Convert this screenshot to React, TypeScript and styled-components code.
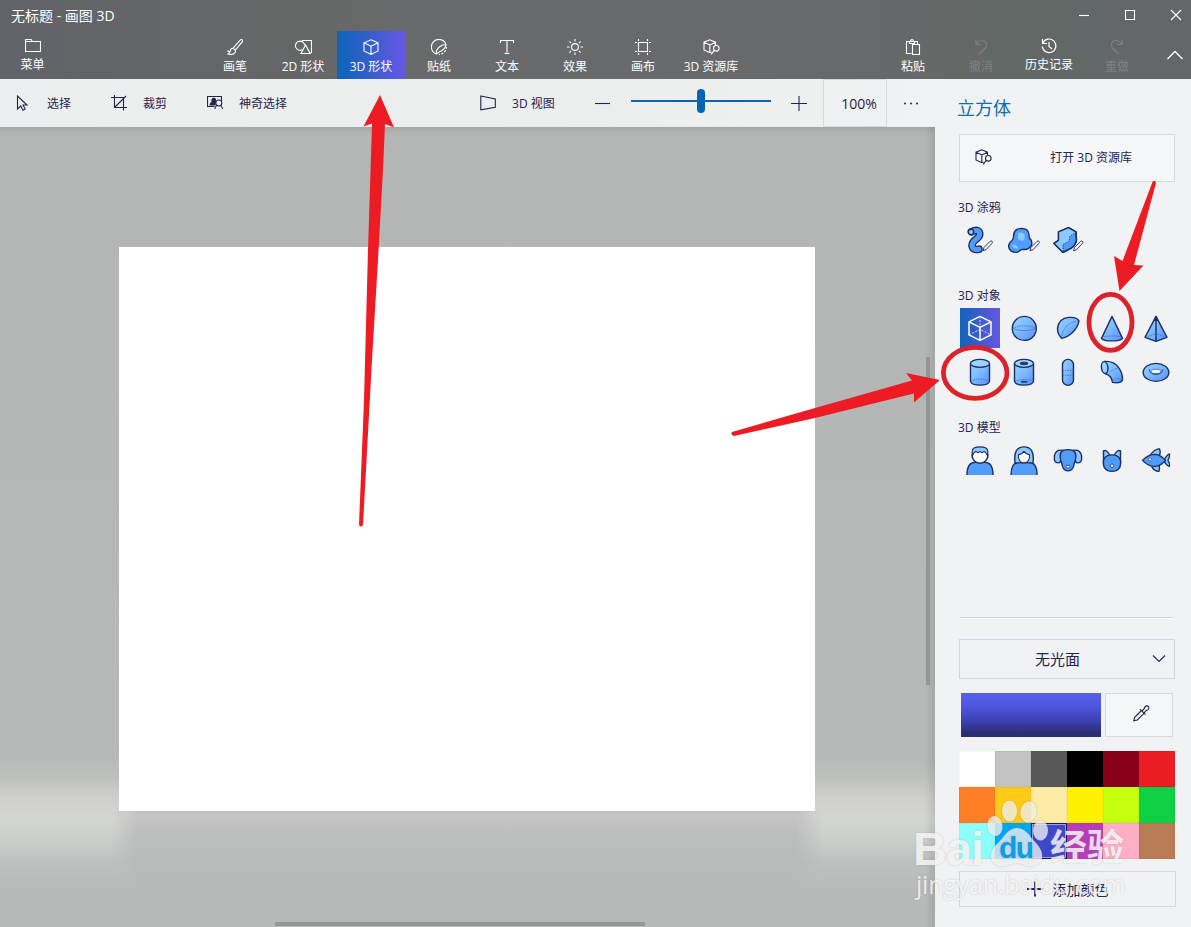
import type { ReactNode } from "react";
import styled, { createGlobalStyle } from "styled-components";

const GlobalStyle = createGlobalStyle`
  * {
    box-sizing: border-box;
  }
  body {
    margin: 0;
    overflow: hidden;
    font-family: "Open Sans", "Noto Sans CJK SC", sans-serif;
    font-size: 12px;
    color: #26234f;
  }
  button {
    font: inherit;
    color: inherit;
    padding: 0;
  }
  svg {
    display: block;
    flex-shrink: 0;
  }
`;

const Window = styled.div`
  position: relative;
  display: flex;
  flex-direction: column;
  width: 1191px;
  height: 927px;
  overflow: hidden;
`;

const Header = styled.header`
  height: 79px;
  color: #ffffff;
  background: linear-gradient(
    90deg,
    #626368 0%,
    #656767 25%,
    #696a6b 35%,
    #68696b 68%,
    #626866 85%,
    #64666a 100%
  );
`;

const TitleBar = styled.div`
  display: flex;
  justify-content: space-between;
  align-items: center;
  height: 31px;
  padding: 0 0 2px 11px;
`;

const Title = styled.span`
  font-size: 14px;
`;

const WindowButtons = styled.div`
  display: flex;
  gap: 30px;
  padding-right: 7px;
`;

const Ribbon = styled.div`
  display: flex;
  height: 48px;
`;

const RibbonButton = styled.button<{
  $active?: boolean;
  $disabled?: boolean;
  $raised?: boolean;
}>`
  display: flex;
  flex-direction: column;
  align-items: center;
  width: 68px;
  height: 48px;
  padding-top: ${(p) => (p.$raised ? 7 : 8)}px;
  border: none;
  line-height: 16px;
  white-space: nowrap;
  gap: ${(p) => (p.$raised ? 3 : 4)}px;
  color: ${(p) => (p.$disabled ? "#808184" : "#ffffff")};
  background: ${(p) =>
    p.$active ? "linear-gradient(90deg, #0b64b8, #6657e4)" : "transparent"};
`;

const MenuButton = styled(RibbonButton)`
  width: 65px;
  margin-right: 136px;
`;

const RibbonTabs = styled.div`
  display: flex;
  flex: 1;
`;

const CollapseButton = styled.button`
  display: flex;
  align-items: center;
  justify-content: center;
  width: 32px;
  margin-left: 8px;
  border: none;
  color: #ffffff;
  background: transparent;
`;

const Body = styled.div`
  display: flex;
  flex: 1;
`;

const Main = styled.main`
  display: flex;
  flex-direction: column;
  width: 935px;
`;

const Toolbar = styled.div`
  display: flex;
  align-items: center;
  height: 48px;
  padding-left: 14px;
  background: linear-gradient(90deg, #edeeef, #eceeed 60%, #f0f2f3);
`;

const Tool = styled.div<{ $gap: number; $after: number }>`
  display: flex;
  align-items: center;
  gap: ${(p) => p.$gap}px;
  margin-right: ${(p) => p.$after}px;
  white-space: nowrap;
`;

const ZoomTrack = styled.div`
  display: flex;
  justify-content: center;
  align-items: center;
  width: 140px;
  height: 2px;
  margin: 0 20px 5px 21px;
  background: #0f66ae;
`;

const ZoomThumb = styled.div`
  width: 8px;
  height: 24px;
  border-radius: 4px;
  background: #0863b1;
`;

const ZoomValue = styled.div`
  display: flex;
  align-items: center;
  justify-content: flex-end;
  width: 64px;
  height: 48px;
  margin-left: 16px;
  padding-right: 9px;
  border: 1px solid #d6d9de;
  font-size: 14px;
`;

const MoreButton = styled.div`
  display: flex;
  flex: 1;
  justify-content: center;
`;

const Workspace = styled.div`
  position: relative;
  flex: 1;
  padding: 120px 0 0 119px;
  background:
    linear-gradient(90deg, transparent 925px, rgba(60, 60, 60, 0.14) 935px),
    linear-gradient(
      180deg,
      #a4a6a5 0,
      #b4b6b5 7px,
      #b5b7b6 300px,
      #b7b9b8 630px,
      #bec0be 650px,
      #cfd0cd 672px,
      #d4d6d3 692px,
      #cdcfcc 712px,
      #bfc1c0 734px,
      #b8bab9 764px,
      #b7b9b8 800px
    );
`;

const Paper = styled.div`
  width: 696px;
  height: 564px;
  background: #ffffff;
`;

const PaperReflection = styled.div`
  width: 712px;
  height: 100px;
  margin-left: -8px;
  background: linear-gradient(
    180deg,
    #bfc1bf 0,
    #c6c7c4 4px,
    #c1c2c1 12px,
    #bcbebd 24px,
    #b8bab9 60px
  );
  mask-image: linear-gradient(
    90deg,
    transparent,
    #000 26px,
    #000 686px,
    transparent
  );
`;

const Scrollbar = styled.div<{ $vertical?: boolean }>`
  position: absolute;
  left: ${(p) => (p.$vertical ? 926 : 275)}px;
  top: ${(p) => (p.$vertical ? 230 : 795)}px;
  width: ${(p) => (p.$vertical ? 4 : 370)}px;
  height: ${(p) => (p.$vertical ? 328 : 4)}px;
  background: #949695;
`;

const SidePanel = styled.aside`
  display: flex;
  flex-direction: column;
  width: 256px;
  padding: 14px 16px 0 24px;
  background: #f0f2f4;
`;

const PanelTitle = styled.h1`
  margin: 0 0 11px -2px;
  font-size: 18px;
  font-weight: 400;
  line-height: 30px;
  color: #136ca4;
`;

const LibraryButton = styled.button`
  display: flex;
  align-items: center;
  justify-content: space-between;
  height: 48px;
  padding: 0 42px 2px 15px;
  border: 1px solid #d7d9de;
  background: #f4f6f8;
`;

const SectionTitle = styled.h2<{ $top: number }>`
  margin: ${(p) => p.$top}px 0 3px -1px;
  font-size: 12px;
  font-weight: 400;
  line-height: 18px;
`;

const ShapeGrid = styled.div`
  display: grid;
  grid-template-columns: repeat(5, 40px);
  grid-auto-rows: 40px;
  gap: 4px;
  margin-left: 1px;
`;

const ShapeButton = styled.button<{ $selected?: boolean }>`
  display: flex;
  align-items: center;
  justify-content: center;
  border: none;
  background: ${(p) =>
    p.$selected ? "linear-gradient(90deg, #1263b8, #6556e2)" : "transparent"};
`;

const Divider = styled.div`
  height: 2px;
  margin: 137px 2px 20px 1px;
  border-top: 1px solid #d3d5da;
  border-bottom: 1px solid #ffffff;
`;

const MaterialSelect = styled.button`
  display: grid;
  grid-template-columns: 30px 1fr 30px;
  align-items: center;
  justify-items: center;
  height: 40px;
  padding-bottom: 2px;
  border: 1px solid #d3d5e0;
  background: #f0f2f5;
  font-size: 15px;
`;

const MaterialName = styled.span`
  margin-right: 19px;
`;

const CurrentColor = styled.div`
  display: flex;
  gap: 4px;
  height: 44px;
  margin: 14px 2px 14px 2px;
`;

const ColorPreview = styled.div`
  width: 140px;
  background: linear-gradient(
    180deg,
    #5660ed 0%,
    #4d55dc 32%,
    #3b3fae 66%,
    #2c2e72 90%,
    #2c2e70 100%
  );
`;

const PickerButton = styled.button`
  display: flex;
  flex: 1;
  align-items: center;
  justify-content: center;
  padding: 0 0 3px 4px;
  border: 1px solid #d7d9de;
  background: #f4f6f8;
`;

const Palette = styled.div`
  display: grid;
  grid-template-columns: repeat(6, 36px);
  grid-auto-rows: 36px;
`;

const Swatch = styled.div<{ $color: string; $selected?: boolean }>`
  background: ${(p) => p.$color};
  border: ${(p) => (p.$selected ? "1px solid #191947" : "none")};
  box-shadow: ${(p) =>
    p.$selected ? "inset 0 0 0 1px #9ba0df" : "inset 0 0 0 1px rgba(0,0,0,0.03)"};
`;

const AddColorButton = styled.button`
  display: flex;
  align-items: center;
  justify-content: center;
  gap: 10px;
  width: 217px;
  height: 36px;
  margin-top: 12px;
  border: 1px solid #d7d9de;
  background: #f0f2f4;
  font-size: 14px;
`;

const Annotations = styled.svg`
  position: absolute;
  inset: 0;
  pointer-events: none;
`;

const Watermark = styled.div`
  position: absolute;
  left: 912px;
  top: 796px;
  width: 220px;
  height: 108px;
  color: rgba(255, 255, 255, 0.78);
  text-shadow: 0 0 2px rgba(130, 130, 130, 0.4);
  pointer-events: none;
`;

const WatermarkText = styled.span<{
  $x: number;
  $y: number;
  $size: number;
  $bold?: boolean;
  $color?: string;
  $spacing?: number;
}>`
  position: absolute;
  left: ${(p) => p.$x}px;
  top: ${(p) => p.$y}px;
  font-family: "Liberation Sans", "Noto Sans CJK SC", sans-serif;
  font-size: ${(p) => p.$size}px;
  font-weight: ${(p) => (p.$bold ? 700 : 400)};
  letter-spacing: ${(p) => p.$spacing ?? 0}px;
  line-height: 1;
  white-space: nowrap;
  color: ${(p) => p.$color ?? "inherit"};
`;

const DomainText = styled(WatermarkText)`
  font-family: "Open Sans", sans-serif;
`;

const Paw = styled.svg`
  position: absolute;
  left: 72px;
  top: 0;
  filter: drop-shadow(0 0 1px rgba(110, 110, 110, 0.5));
`;

type IconProps = {
  children: ReactNode;
  width?: number;
  height?: number;
  strokeWidth?: number;
};

const Icon = ({
  children,
  width = 16,
  height = 16,
  strokeWidth = 1.1,
}: IconProps) => (
  <svg
    width={width}
    height={height}
    viewBox={`0 0 ${width} ${height}`}
    fill="none"
    stroke="currentColor"
    strokeWidth={strokeWidth}
  >
    {children}
  </svg>
);

const FolderIcon = () => (
  <Icon>
    <path d="M.5 1.5H6L7.5 3.5H15.5V13.5H.5ZM.5 3.5H7.5" />
  </Icon>
);

const BrushIcon = () => (
  <Icon>
    <path d="M6 9.2L13.2 1.2Q14.5 0 15.4 1Q16 2 15 3.2L8.3 11.2M6 9.2L8.3 11.2M6 9.2Q3.7 9.3 3.2 12Q2.8 14.3 1 15Q5.5 16.3 7.5 14.2Q9 12.7 8.3 11.2M.5 11.5L3 13.5" />
  </Icon>
);

const Shapes2DIcon = () => (
  <Icon width={17}>
    <path d="M7.5 2.8V1.5H16.5V13.5H15.5M10.5 6L6 14.5H15.2Z" />
    <path d="M7.2 10.8A4.6 4.6 0 1 1 9.6 6" />
  </Icon>
);

const CubeIcon = () => (
  <Icon>
    <path d="M8 .8L15 3.8V12L8 15.4L1 12V3.8ZM1 3.8L8 7.2L15 3.8M8 7.2V15.4" />
  </Icon>
);

const StickerIcon = () => (
  <Icon>
    <path d="M5.5 15A7.5 7.5 0 1 1 15 5.5M5.5 15Q4.5 10.5 9 7.5Q12 5.3 15 5.5Q14.8 9 11 11.5Q7.5 13 5.5 15" />
    <path d="M15.4 8A7.5 7.5 0 0 1 8 15.4" strokeDasharray="2 1.5" />
  </Icon>
);

const TextIcon = () => (
  <Icon>
    <path d="M1.5 4V1.5H14.5V4M8 1.5V14.5M5.5 14.5H10.5" />
  </Icon>
);

const EffectsIcon = () => (
  <Icon>
    <circle cx="8" cy="8" r="3.4" />
    <path d="M8 0V2.5M8 13.5V16M0 8H2.5M13.5 8H16M2.4 2.4L4.1 4.1M11.9 11.9L13.6 13.6M13.6 2.4L11.9 4.1M4.1 11.9L2.4 13.6" />
  </Icon>
);

const CanvasIcon = () => (
  <Icon>
    <path d="M3.5 3.5H12.5V12.5H3.5ZM3.5 0V2M12.5 0V2M3.5 14V16M12.5 14V16M0 3.5H2M14 3.5H16M0 12.5H2M14 12.5H16" />
  </Icon>
);

const LibraryIcon = () => (
  <Icon width={17}>
    <path d="M12.5 6V3.2L6.8.8L1 3.2V11L6.8 13.7L8.5 12.9M1 3.2L6.8 6L12.5 3.2M6.8 6V13.7" />
    <circle cx="13.3" cy="9.3" r="2.8" />
    <path d="M11.3 11.3L8.2 15.4" />
  </Icon>
);

const PasteIcon = () => (
  <Icon>
    <path d="M6.5 14.5H1.5V2.5H12.5V5.5M4.5 4.5V2.5H5.5Q5.5.6 7 .6Q8.5.6 8.5 2.5H9.5V4.5ZM7.5 5.5H14.5V15.5H7.5Z" />
  </Icon>
);

const UndoIcon = () => (
  <Icon>
    <path d="M3 .5V5.5H8M3 5.2Q6 1.5 9.5 1.5Q13.5 2 13.5 6Q13.5 8 12 9.5L6 15.3" />
  </Icon>
);

const RedoIcon = () => (
  <Icon>
    <path d="M13 .5V5.5H8M13 5.2Q10 1.5 6.5 1.5Q2.5 2 2.5 6Q2.5 8 4 9.5L10 15.3" />
  </Icon>
);

const HistoryIcon = () => (
  <Icon strokeWidth={1.2}>
    <path d="M1.5 1V5.5H6M1.8 5.2A6.8 6.8 0 1 1 1.3 8.5M8 4V8.5L11 11" />
  </Icon>
);

const MagicSelectIcon = () => (
  <Icon width={17}>
    <path d="M7.5 11.5H.5V1.5H14.5V6" />
    <path d="M3 10Q3.2 7.8 5.2 7.4Q4 3.4 7 3.4Q9 3.6 8.4 6.2L8 10Z" fill="currentColor" />
    <circle cx="11.8" cy="8" r="3" />
    <path d="M9.8 10.4Q8.3 11.5 7.8 14.2M13.6 10.4Q15 11.5 15.6 14.2" />
  </Icon>
);

const tabs = [
  { label: "画笔", icon: <BrushIcon /> },
  { label: "2D 形状", icon: <Shapes2DIcon /> },
  { label: "3D 形状", icon: <CubeIcon />, active: true },
  { label: "贴纸", icon: <StickerIcon /> },
  { label: "文本", icon: <TextIcon /> },
  { label: "效果", icon: <EffectsIcon /> },
  { label: "画布", icon: <CanvasIcon /> },
  { label: "3D 资源库", icon: <LibraryIcon /> },
];

const actions = [
  { label: "粘贴", icon: <PasteIcon /> },
  { label: "撤消", icon: <UndoIcon />, disabled: true },
  { label: "历史记录", icon: <HistoryIcon />, raised: true },
  { label: "重做", icon: <RedoIcon />, disabled: true },
];

const swatches = [
  "#ffffff", "#c3c3c3", "#585858", "#000000", "#88001b", "#ec1c24",
  "#ff7f27", "#ffca18", "#fdeca6", "#fff200", "#c4ff0e", "#0ed145",
  "#8cfffb", "#00a8f3", "#3f48cc", "#b83dba", "#ffaec8", "#b97a56",
];
const selectedColor = "#3f48cc";

// Shape drawings are centred on the origin
const Shape = ({ children }: { children: ReactNode }) => (
  <svg
    width="36"
    height="36"
    viewBox="-18 -18.4 36 36"
    fill="url(#shapeFill)"
    stroke="#1c2e63"
    strokeWidth="1.4"
    strokeLinejoin="round"
  >
    {children}
  </svg>
);

const dashed = {
  fill: "none",
  stroke: "#3465ae",
  strokeWidth: 0.8,
  strokeDasharray: "1.5 1",
};

const Pencil = ({ x }: { x: number }) => (
  <path
    d="M0 9.5L1 6.3L7 .2Q8.5-.8 9.2 .3Q9.8 1.3 8.8 2.3L3 8.5Z"
    transform={`translate(${x} .8)`}
    fill="#f5f6fa"
    stroke="#37365f"
    strokeWidth="1"
  />
);

const tubePath = "M-8.5-8.7Q-1.5-12-.3-7Q0-4-3.5-1.5Q-9.5 3-7.5 7Q-6 9.8-1 8.8";

const doodles = [
  <Shape key="tube">
    <path d={tubePath} fill="none" strokeWidth="7.6" strokeLinecap="round" />
    <path d={tubePath} fill="none" stroke="#509cfa" strokeWidth="5" strokeLinecap="round" />
    <circle cx="-9" cy="-8.5" r="2.7" fill="#8fcbfc" />
    <Pencil x={3} />
  </Shape>,
  <Shape key="blob">
    <path d="M-10.5-3Q-11-11.8-2.5-12Q5-12 5.2-4.5Q5-2 7-.5Q9.5 5 4.5 8Q2.5 9.3-1 9Q-3 9-5.5 11.3Q-9 13-13 10.5Q-17.5 6-13.5 1.5Q-11 0-10.5-3Z" fill="#519dfb" />
    <path d="M-6-7.5Q-1-8.5 .5-6V-.5Q-3 1.5-6-1.5ZM-12.5 4.5Q-8 3-5.5 8Q-10 8.5-12.5 4.5Z" fill="#8bcafc" stroke="none" />
    <Pencil x={6} />
  </Shape>,
  <Shape key="rock">
    <path d="M-9.5-8.5L.5-12.7L8-8.5L8.5 0Q7 7-1 10L-5 12L-14 3L-9.5 0Z" fill="#509cfa" />
    <path d="M-9.5-8.5L.5-12.7L8-8.5L2-4L1 1L-5 4V12L-14 3L-9.5 0Z" fill="#8bcafc" stroke="none" />
    <path d="M8-8.5L2-4L1 1L-5 4V12" {...dashed} stroke="#1c2e63" />
    <path d="M-9.5-8.5L.5-12.7L8-8.5L8.5 0Q7 7-1 10L-5 12L-14 3L-9.5 0Z" fill="none" />
    <Pencil x={5.5} />
  </Shape>,
];

const objects = [
  <Shape key="cube">
    <g fill="none" stroke="#ffffff">
      <path d="M0-12L11-6.5V6.5L0 12L-11 6.5V-6.5ZM-11-6.5L0-1L11-6.5M0-1V12" strokeWidth="1.5" />
      <path d="M0-12V0M-11 6.5L0 1L11 6.5" strokeWidth=".8" strokeDasharray="2 1.5" />
    </g>
  </Shape>,
  <Shape key="sphere">
    <circle cx=".3" r="12" />
    <path d="M-11.7 0Q0 4.5 12.3 0" fill="none" strokeWidth=".6" stroke="#3465ae" />
    <path d="M-11.7 0Q0-5 12.3 0" {...dashed} />
  </Shape>,
  <Shape key="hemisphere">
    <path d="M-6 10Q-10.5 6-10.5 0Q-9.5-10 1-11Q9-11.5 11-7.5Q10-1 4 4.5Q-1 9-6 10Z" />
    <path d="M-6 10Q-6 2-1-2.5Q5-7.5 11-7.5" {...dashed} />
  </Shape>,
  <Shape key="cone">
    <path d="M0-12L10.5 10Q8 12.5 0 12.5Q-8 12.5-10.5 10Z" />
    <path d="M-10 9Q0 6 10 9" {...dashed} />
  </Shape>,
  <Shape key="pyramid">
    <path d="M0-12L11 9L0 13L-11 9ZM0-12V13" />
    <path d="M-10 9L0 5L10 9" {...dashed} />
    <path d="M-1.5-8L0-12L1.5-8Z" fill="#1c2e63" />
  </Shape>,
  <Shape key="cylinder">
    <path d="M-9.5-9V9C-8 14 8 14 9.5 9V-9" />
    <ellipse cy="-9" rx="9.5" ry="4" fill="#9bd5ff" />
    <path d="M-9 9Q0 4 9 9" {...dashed} />
  </Shape>,
  <Shape key="pipe">
    <path d="M-9.5-9V9C-8 14 8 14 9.5 9V-9" />
    <ellipse cy="-9" rx="9.5" ry="4" fill="#9bd5ff" />
    <ellipse cy="-9" rx="4" ry="1.3" fill="#243968" strokeWidth=".7" />
    <ellipse cy="9.3" rx="3.5" ry="1" fill="#23417e" stroke="none" />
    <path d="M-9 9Q0 5 9 9" {...dashed} />
  </Shape>,
  <Shape key="capsule">
    <rect x="-5.5" y="-13" width="11" height="26" rx="5.5" />
    <path d="M-5.5-1Q0-3 5.5-1M-5.5 2Q0 4 5.5 2" {...dashed} />
  </Shape>,
  <Shape key="elbow">
    <path d="M-7.5-11Q2-11.5 6.5-5Q11 1 10.5 8Q8 11.5 .5 10Q-.5 3-6.5 1.5Z" />
    <ellipse cx="-7.3" cy="-4.8" rx="3.2" ry="6" transform="rotate(-8 -7.3 -4.8)" fill="#9bd5ff" />
    <path d="M.5 8Q5 4 10 8M-3 1Q3-5 7-4" {...dashed} />
  </Shape>,
  <Shape key="torus">
    <ellipse rx="12.8" ry="9" />
    <ellipse cy="-1" rx="4.8" ry="2.2" fill="#eef5fc" stroke="#3465ae" strokeWidth=".8" />
    <path d="M-7-3Q-6 2 0 2Q6 2 7-3" fill="none" strokeWidth=".8" stroke="#1c2e63" />
  </Shape>,
];

const models = [
  <Shape key="man">
    <path d="M-13 14.5Q-13 2-5 2H5Q13 2 13 14.5" fill="#529dfa" stroke="#1c2e63" />
    <circle cy="-5" r="7.8" fill="#ffffff" />
    <path d="M-7.8-3V-9Q-8-13.5 0-13.5Q8-13.5 7.8-9V-3Q7-8 4-9L2-7.5L0-9L-2-7.5L-4-9Q-7-8-7.8-3Z" fill="#8ac9fc" strokeWidth="1.1" />
  </Shape>,
  <Shape key="woman">
    <path d="M-13 14.5Q-13 2-5 2H5Q13 2 13 14.5" fill="#529dfa" />
    <path d="M-9 2.5Q-11-13.5 0-13.5Q11-13.5 9 2.5Z" fill="#8ac9fc" />
    <path d="M0-9Q2-6 5.5-5.5Q6 2.3 0 2.3Q-6 2.3-5.5-5.5Q-2-6 0-9Z" fill="#ffffff" strokeWidth="1.1" />
  </Shape>,
  <Shape key="dog">
    <path d="M-5-10Q-12-11.5-13.5-5Q-14.5 2.5-10 2.5Q-7 2.5-7-2ZM5-10Q12-11.5 13.5-5Q14.5 2.5 10 2.5Q7 2.5 7-2Z" fill="#8ac9fc" />
    <path d="M-5-10Q0-11.5 5-10Q9-7 7.5-1Q6.5 2 5.5 6Q4 10.5 0 10.5Q-4 10.5-5.5 6Q-6.5 2-7.5-1Q-9-7-5-10Z" fill="#509cfa" />
    <ellipse cy="6.3" rx="2" ry="1.5" fill="#f5e9ec" strokeWidth=".8" />
  </Shape>,
  <Shape key="cat">
    <path d="M-8.5 1L-8.5-9.5Q-6-11.5-2-5ZM8.5 1L8.5-9.5Q6-11.5 2-5Z" fill="#8ac9fc" />
    <path d="M-8.7 1Q-7.5-5.5 0-5.5Q7.5-5.5 8.7 1Q9 11 0 11Q-9 11-8.7 1Z" fill="#509cfa" />
    <path d="M-2 4.5Q0 2.5 2 4.5Q1 7.5 0 7.5Q-1 7.5-2 4.5Z" fill="#f5e9ec" strokeWidth=".7" />
  </Shape>,
  <Shape key="fish">
    <path d="M-6-5Q-1-12 3.5-11.5Q5-8.5 3.5-4.5M-5 5Q-2 11 3 11Q4 8 3 4" fill="#8ac9fc" />
    <path d="M8 0Q11-6 13.5-6.5Q14-3 12 0Q14 3 13.5 6Q10 5 8 0Z" fill="#8ac9fc" />
    <path d="M-13.5 0Q-8-6 -1-6Q5-5.5 9.5 0Q5 5.5-1 6Q-8 6-13.5 0Z" fill="#509cfa" />
    <circle cx="-6" cy="-1" r="1.6" fill="#e7eef7" strokeWidth=".6" />
  </Shape>,
];

const App = () => (
  <Window>
    <GlobalStyle />
    <svg width="0" height="0" style={{ position: "absolute" }}>
      <defs>
        <linearGradient id="shapeFill" x1="0" y1="0" x2="1" y2="1">
          <stop offset="0" stopColor="#91d5ff" />
          <stop offset=".4" stopColor="#82bfff" />
          <stop offset="1" stopColor="#588efa" />
        </linearGradient>
      </defs>
    </svg>
    <Header>
      <TitleBar>
        <Title>无标题 - 画图 3D</Title>
        <WindowButtons>
          <Icon><path d="M3 8.5H13" /></Icon>
          <Icon><path d="M3.5 3.5H12.5V12.5H3.5Z" /></Icon>
          <Icon><path d="M3 3L13 13M13 3L3 13" /></Icon>
        </WindowButtons>
      </TitleBar>
      <Ribbon>
        <MenuButton $raised>
          <FolderIcon />
          菜单
        </MenuButton>
        <RibbonTabs>
          {tabs.map((tab) => (
            <RibbonButton key={tab.label} $active={tab.active}>
              {tab.icon}
              {tab.label}
            </RibbonButton>
          ))}
        </RibbonTabs>
        {actions.map((action) => (
          <RibbonButton
            key={action.label}
            $disabled={action.disabled}
            $raised={action.raised}
          >
            {action.icon}
            {action.label}
          </RibbonButton>
        ))}
        <CollapseButton>
          <Icon><path d="M.5 12L8 4.5L15.5 12" strokeWidth="1.3" /></Icon>
        </CollapseButton>
      </Ribbon>
    </Header>
    <Body>
      <Main>
        <Toolbar>
          <Tool $gap={17} $after={40}>
            <Icon><path d="M3.5 1V14L6.7 11L9 15.2L11.2 14L9 10H13Z" /></Icon>
            选择
          </Tool>
          <Tool $gap={16} $after={40}>
            <Icon><path d="M3.5 0V12.5H16M0 2.5H12.5V15.5M3.5 12.5L15 1" /></Icon>
            裁剪
          </Tool>
          <Tool $gap={15} $after={193}>
            <MagicSelectIcon />
            神奇选择
          </Tool>
          <Tool $gap={16} $after={39}>
            <Icon><path d="M.8 1L15.3 4V12.3L.8 14.8Z" /></Icon>
            3D 视图
          </Tool>
          <Icon><path d="M1 8.5H16" /></Icon>
          <ZoomTrack>
            <ZoomThumb />
          </ZoomTrack>
          <Icon><path d="M0 8.5H16M8 1V16" /></Icon>
          <ZoomValue>100%</ZoomValue>
          <MoreButton>
            <Icon>
              <g fill="currentColor" stroke="none">
                <circle cx="2" cy="8.5" r="1" />
                <circle cx="8" cy="8.5" r="1" />
                <circle cx="14" cy="8.5" r="1" />
              </g>
            </Icon>
          </MoreButton>
        </Toolbar>
        <Workspace>
          <Paper />
          <PaperReflection />
          <Scrollbar $vertical />
          <Scrollbar />
        </Workspace>
      </Main>
      <SidePanel>
        <PanelTitle>立方体</PanelTitle>
        <LibraryButton>
          <LibraryIcon />
          打开 3D 资源库
        </LibraryButton>
        <SectionTitle $top={17}>3D 涂鸦</SectionTitle>
        <ShapeGrid>
          {doodles.map((shape) => (
            <ShapeButton key={shape.key}>{shape}</ShapeButton>
          ))}
        </ShapeGrid>
        <SectionTitle $top={27}>3D 对象</SectionTitle>
        <ShapeGrid>
          {objects.map((shape) => (
            <ShapeButton key={shape.key} $selected={shape.key === "cube"}>
              {shape}
            </ShapeButton>
          ))}
        </ShapeGrid>
        <SectionTitle $top={27}>3D 模型</SectionTitle>
        <ShapeGrid>
          {models.map((shape) => (
            <ShapeButton key={shape.key}>{shape}</ShapeButton>
          ))}
        </ShapeGrid>
        <Divider />
        <MaterialSelect>
          <span />
          <MaterialName>无光面</MaterialName>
          <Icon><path d="M2 5.5L8 11.5L14 5.5" /></Icon>
        </MaterialSelect>
        <CurrentColor>
          <ColorPreview />
          <PickerButton>
            <Icon width={17} height={17}>
              <path d="M8.5 5.5L1.7 12.3L.8 15.8L4.3 15L11.2 8.2M7 4.2L12.5 9.7M9 6L11 4Q11.8 .8 14 .9Q16.3 1.3 15.8 3.3Q15.3 5 12.9 5.8L11 8" />
            </Icon>
          </PickerButton>
        </CurrentColor>
        <Palette>
          {swatches.map((color) => (
            <Swatch
              key={color}
              $color={color}
              $selected={color === selectedColor}
            />
          ))}
        </Palette>
        <AddColorButton>
          <Icon strokeWidth={1.8}><path d="M0 8H16M8 .5V15.5" /></Icon>
          添加颜色
        </AddColorButton>
      </SidePanel>
    </Body>
    <Annotations width="1191" height="927" viewBox="0 0 1191 927">
      <g fill="#ed1c24">
        <path d="M380 95L394 127.5L385 124L383 170L378 260L372 360L363 525Q361 528 359 525L364 400L368 250L372 123.5L363.5 126.5Z" />
        <path d="M940 380L914 402.5V393.5L815 418L734 436Q730 435 732 432L815 408L912 380.5L906 373Z" />
        <path d="M1119.5 291L1114 256L1122.5 261L1152.5 182Q1155 179 1156 183L1134 265L1143.5 265.5Z" />
      </g>
      <g fill="none" stroke="#da232b" strokeWidth="4.8">
        <ellipse cx="975.2" cy="372.8" rx="31.8" ry="25.5" />
        <ellipse cx="1110.5" cy="322.4" rx="21.5" ry="28" />
      </g>
    </Annotations>
    <Watermark>
      <WatermarkText $x={1} $y={29} $size={47} $bold $spacing={-1}>
        Bai
      </WatermarkText>
      <Paw width="80" height="72" viewBox="0 0 80 72" fill="rgba(255,255,255,.7)">
        <ellipse cx="11" cy="30" rx="7.5" ry="10" transform="rotate(-8 11 30)" />
        <ellipse cx="25.5" cy="15" rx="7.5" ry="10.5" />
        <ellipse cx="44.5" cy="16" rx="8" ry="10.5" transform="rotate(8 44.5 16)" />
        <ellipse cx="56.5" cy="34.5" rx="7.5" ry="10" />
        <path d="M33 32C42 32 46 41 52 47C62 57 59 69 48 70C42 71 38 67 33 67C26 67 23 71 16 70C5 68 4 56 13 48C20 42 23 32 33 32Z" />
      </Paw>
      <WatermarkText $x={87} $y={37} $size={30} $bold $color="#0f9de4" $spacing={-1.5}>
        du
      </WatermarkText>
      <WatermarkText $x={138} $y={34} $size={37} $bold>
        经验
      </WatermarkText>
      <DomainText $x={4} $y={76} $size={25} $spacing={-0.2}>
        jingyan.baidu.com
      </DomainText>
    </Watermark>
  </Window>
);

export default App;
